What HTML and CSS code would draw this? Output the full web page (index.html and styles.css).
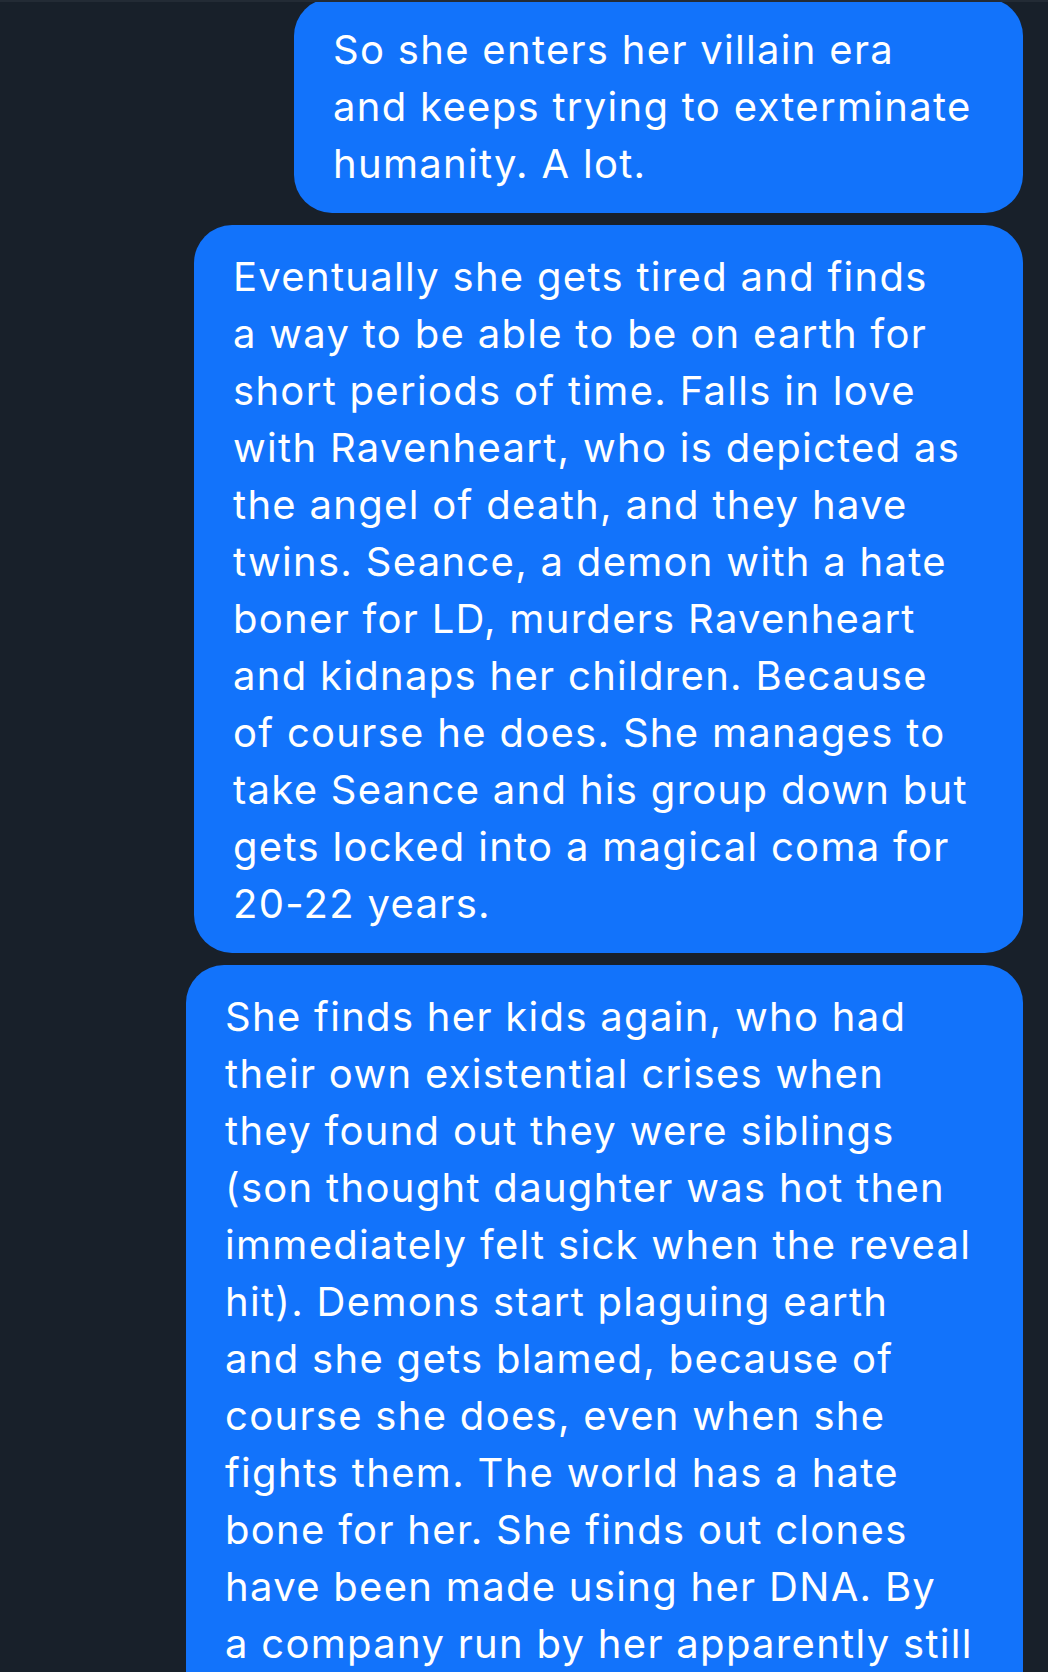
FILE: index.html
```html
<!DOCTYPE html>
<html lang="en">
<head>
<meta charset="utf-8">
<title>Chat</title>
<link rel="stylesheet" href="styles.css">
</head>
<body>
<div class="topbar"></div>
<main class="thread">
  <div class="bubble bubble-a">So she enters her villain era<br>and keeps trying to exterminate<br>humanity. A lot.</div>
  <div class="bubble bubble-b">Eventually she gets tired and finds<br>a way to be able to be on earth for<br>short periods of time. Falls in love<br>with Ravenheart, who is depicted as<br>the angel of death, and they have<br>twins. Seance, a demon with a hate<br>boner for LD, murders Ravenheart<br>and kidnaps her children. Because<br>of course he does. She manages to<br>take Seance and his group down but<br>gets locked into a magical coma for<br>20-22 years.</div>
  <div class="bubble bubble-c">She finds her kids again, who had<br>their own existential crises when<br>they found out they were siblings<br>(son thought daughter was hot then<br>immediately felt sick when the reveal<br>hit). Demons start plaguing earth<br>and she gets blamed, because of<br>course she does, even when she<br>fights them. The world has a hate<br>bone for her. She finds out clones<br>have been made using her DNA. By<br>a company run by her apparently still</div>
</main>
</body>
</html>
```
FILE: styles.css
```css
html, body {
  margin: 0;
  padding: 0;
}
body {
  background: #18202a;
  height: 1672px;
  overflow: hidden;
  font-family: Inter, "Noto Sans", sans-serif;
}
.topbar {
  height: 2px;
  background: #232b35;
  position: relative;
  z-index: 1;
}
.thread {
  display: flex;
  flex-direction: column;
  align-items: flex-end;
  gap: 12px;
  padding-right: 25px;
  margin-top: -4px;
}
.bubble {
  box-sizing: border-box;
  background: #1273fb;
  color: #ffffff;
  font-size: 40px;
  letter-spacing: 1.3px;
  line-height: 57px;
  white-space: nowrap;
  padding: 23px 10px 21px 39px;
  border-radius: 38px;
}
.bubble-a { width: 729px; }
.bubble-b { width: 829px; }
.bubble-c { width: 837px; padding-bottom: 40px; }
```
